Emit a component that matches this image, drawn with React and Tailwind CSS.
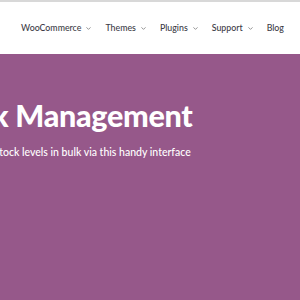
import { ChevronDown } from 'lucide-react';

const navItems = [
  { label: 'WooCommerce', menu: true },
  { label: 'Themes', menu: true },
  { label: 'Plugins', menu: true },
  { label: 'Support', menu: true },
  { label: 'Blog', menu: false },
];

const App = () => {
  return (
    <div className="w-[300px] h-[300px] overflow-hidden bg-[#96588a] font-['Lato',sans-serif]">
      {/* Top nav */}
      <div className="bg-white border-t-2 border-[#d8d8d8] h-[54px] flex items-center pl-[21px]">
        <nav className="flex items-center gap-[13px] whitespace-nowrap">
          {navItems.map(item => (
            <span key={item.label} className="flex items-center gap-[4px] text-[8.8px] font-medium text-[#3c3c46]">
              {item.label}
              {item.menu && <ChevronDown className="w-[7px] h-[7px] text-[#6d6d6d] stroke-[2.5]" />}
            </span>
          ))}
        </nav>
      </div>

      {/* Hero */}
      <div className="overflow-hidden pt-[46px]">
        <h1 className="whitespace-nowrap ml-[-134px] text-[30.5px] leading-none font-black text-white tracking-[-0.3px]">
          Bulk Stock Management
        </h1>
        <p className="whitespace-nowrap ml-[-45px] mt-[14px] text-[10.5px] font-medium text-white">
          Manage stock levels in bulk via this handy interface
        </p>
      </div>
    </div>
  );
};

export default App;
